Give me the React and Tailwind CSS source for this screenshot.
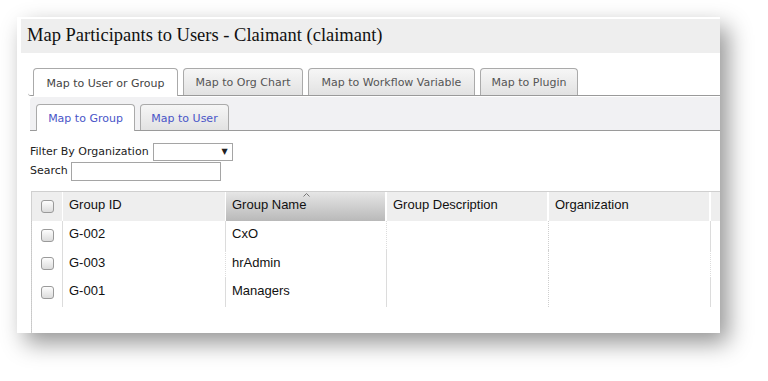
import React from "react";

const tabs = [
  { t: "Map to User or Group", w: "w-[145px]" },
  { t: "Map to Org Chart", w: "w-[120px]" },
  { t: "Map to Workflow Variable", w: "w-[167px]" },
  { t: "Map to Plugin", w: "w-[98px]" },
];
const subTabs = [
  { t: "Map to Group", w: "w-[99px]" },
  { t: "Map to User", w: "w-[89px]" },
];
const rows = [
  { id: "G-002", name: "CxO" },
  { id: "G-003", name: "hrAdmin" },
  { id: "G-001", name: "Managers" },
];

function Check() {
  return (
    <span className="block w-[13px] h-[13px] rounded-[3px] border border-[#9a9a9a] bg-gradient-to-b from-[#fdfdfd] to-[#dcdcdc]" />
  );
}

export default function App() {
  return (
    <div className="w-[768px] h-[381px] bg-white overflow-hidden pl-[17px] pt-[17px]">
      <div className="w-[703px] h-[316px] bg-white shadow-[8px_10px_22px_rgba(0,0,0,0.42)] pl-[4px] pt-[2px] overflow-hidden">
        {/* title */}
        <div className="h-[34px] bg-[#eeeeee] flex items-center pl-[6px] text-[18.5px] text-[#111] font-['Liberation_Serif',serif]">
          Map Participants to Users - Claimant (claimant)
        </div>

        {/* main tabs */}
        <div className="mt-[15px] ml-[7px] flex gap-[5px] pl-[5px] border-b border-[#9a9a9a] rounded-bl-[3px] font-['DejaVu_Sans',sans-serif] text-[11px]">
          {tabs.map((x, i) =>
            i === 0 ? (
              <div key={x.t} className={`${x.w} h-[28px] -mb-px pt-[3px] flex items-center justify-center bg-white border border-b-0 border-[#aaaaaa] rounded-t-[4px] text-[#444]`}>
                {x.t}
              </div>
            ) : (
              <div key={x.t} className={`${x.w} h-[27px] pt-[3px] flex items-center justify-center bg-gradient-to-b from-[#f6f6f6] to-[#e2e2e2] border border-b-0 border-[#aaaaaa] rounded-t-[4px] text-[#555]`}>
                {x.t}
              </div>
            )
          )}
        </div>

        {/* sub tabs panel */}
        <div className="mt-[1px] ml-[9px] pt-[7px] pl-[6px] flex gap-[5px] bg-[#f1f1f3] border-b border-[#9a9a9a] rounded-tl-[4px] font-['DejaVu_Sans',sans-serif] text-[11px]">
          {subTabs.map((x, i) =>
            i === 0 ? (
              <div key={x.t} className={`${x.w} h-[27px] -mb-px pt-[3px] flex items-center justify-center bg-white border border-b-0 border-[#aaaaaa] rounded-t-[4px] text-[#4a55c8]`}>
                {x.t}
              </div>
            ) : (
              <div key={x.t} className={`${x.w} h-[26px] pt-[3px] flex items-center justify-center bg-gradient-to-b from-[#f6f6f6] to-[#e2e2e2] border border-b-0 border-[#aaaaaa] rounded-t-[4px] text-[#4a55c8]`}>
                {x.t}
              </div>
            )
          )}
        </div>

        {/* filters */}
        <div className="ml-[9px] mt-[12px] font-['DejaVu_Sans',sans-serif] text-[11px] text-[#222]">
          <div className="flex items-center h-[18px]">
            <span>Filter By Organization</span>
            <div className="ml-[4px] w-[80px] h-[18px] border border-[#a5a5a5] flex items-center justify-end pr-[4px] text-[8px]">
              ▼
            </div>
          </div>
          <div className="flex items-center h-[19px] mt-[1px]">
            <span>Search</span>
            <div className="ml-[3px] w-[150px] h-[19px] border border-[#a5a5a5]" />
          </div>
        </div>

        {/* table */}
        <div className="mt-[10px] ml-[10px] w-[700px] h-[142px] border-t border-[#cfcfcf] border-l border-l-[#d0d0d0] font-['Liberation_Sans',Arial,sans-serif] text-[13px] text-[#111]">
          <div className="flex h-[29px] bg-[#eeeeee]">
            <div className="w-[31px] flex items-center justify-center border-r border-white">
              <Check />
            </div>
            <div className="w-[163px] flex items-center pl-[6px] pb-[3px] border-r border-white">Group ID</div>
            <div className="relative w-[161px] flex items-center pl-[6px] pb-[3px] border-r-2 border-white bg-gradient-to-b from-[#e6e6e6] to-[#b9b9b9]">
              Group Name
              <svg className="absolute left-[77px] top-[1px]" width="7" height="4" viewBox="0 0 7 4">
                <path d="M0.5 3.5 L3.5 0.5 L6.5 3.5" fill="none" stroke="#777" strokeWidth="1" />
              </svg>
            </div>
            <div className="w-[162px] flex items-center pl-[6px] pb-[3px] border-r-2 border-white">Group Description</div>
            <div className="w-[162px] flex items-center pl-[6px] pb-[3px] border-r-2 border-white">Organization</div>
            <div className="flex-1" />
          </div>
          <div className="border-l border-dotted border-[#c8c8c8] -ml-px h-[113px]">
            {rows.map((r, i) => (
              <div key={r.id} className="flex h-[28.5px]">
                <div className="w-[31px] flex items-center justify-center border-r border-[#dcdcdc]">
                  <Check />
                </div>
                <div className={`w-[163px] flex items-center pl-[6px] pb-[3px] border-r border-[#dcdcdc] ${i === 1 ? "border-dotted" : ""}`}>{r.id}</div>
                <div className={`w-[161px] flex items-center pl-[6px] pb-[3px] border-r border-[#dcdcdc] ${i === 0 ? "border-dotted" : ""}`}>{r.name}</div>
                <div className="w-[162px] border-r border-dotted border-[#cfcfcf]" />
                <div className={`w-[162px] border-r border-[#dcdcdc] ${i === 1 ? "border-dotted" : ""}`} />
                <div className="flex-1" />
              </div>
            ))}
          </div>
        </div>
      </div>
    </div>
  );
}
